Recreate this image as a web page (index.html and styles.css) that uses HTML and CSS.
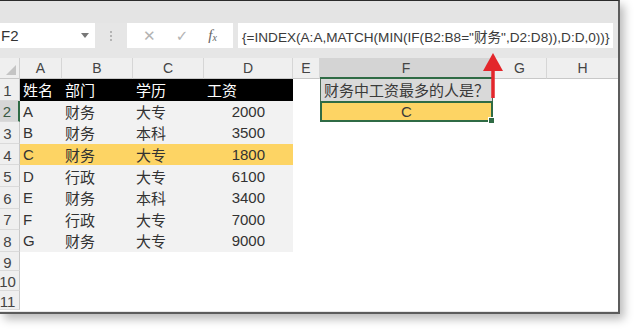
FILE: index.html
```html
<!DOCTYPE html>
<html lang="zh">
<head>
<meta charset="utf-8">
<link rel="stylesheet" href="styles.css">
</head>
<body>
<div class="window">
  <div class="ribbon"></div>
  <div class="fbar">
    <div class="namebox"><span class="ref">F2</span><span class="dd"></span></div>
    <div class="dots"><i></i><i></i><i></i></div>
    <div class="btns">
      <span class="ico">✕</span>
      <span class="ico">✓</span>
      <span class="fx">f<sub>x</sub></span>
    </div>
    <div class="formula">{=INDEX(A:A,MATCH(MIN(IF(B2:B8="财务",D2:D8)),D:D,0))}</div>
  </div>
  <div class="sheet">
    <div class="corner"><span class="tri"></span></div>
    <div class="ch">A</div><div class="ch">B</div><div class="ch">C</div><div class="ch">D</div><div class="ch">E</div><div class="ch on">F</div><div class="ch">G</div><div class="ch last">H</div>

    <div class="rh"><span>1</span></div>
    <div class="c hd">姓名</div><div class="c hd">部门</div><div class="c hd">学历</div><div class="c hd">工资</div><div class="c"></div><div class="c q">财务中工资最多的人是？</div><div class="c"></div><div class="c"></div>

    <div class="rh on"><span>2</span></div>
    <div class="c dt">A</div><div class="c dt">财务</div><div class="c dt">大专</div><div class="c dt num">2000</div><div class="c"></div><div class="c sel">C<span class="handle"></span></div><div class="c"></div><div class="c"></div>

    <div class="rh"><span>3</span></div>
    <div class="c dt">B</div><div class="c dt">财务</div><div class="c dt">本科</div><div class="c dt num">3500</div><div class="c"></div><div class="c"></div><div class="c"></div><div class="c"></div>

    <div class="rh"><span>4</span></div>
    <div class="c hl">C</div><div class="c hl">财务</div><div class="c hl">大专</div><div class="c hl num">1800</div><div class="c"></div><div class="c"></div><div class="c"></div><div class="c"></div>

    <div class="rh"><span>5</span></div>
    <div class="c dt">D</div><div class="c dt">行政</div><div class="c dt">大专</div><div class="c dt num">6100</div><div class="c"></div><div class="c"></div><div class="c"></div><div class="c"></div>

    <div class="rh"><span>6</span></div>
    <div class="c dt">E</div><div class="c dt">财务</div><div class="c dt">本科</div><div class="c dt num">3400</div><div class="c"></div><div class="c"></div><div class="c"></div><div class="c"></div>

    <div class="rh"><span>7</span></div>
    <div class="c dt">F</div><div class="c dt">行政</div><div class="c dt">大专</div><div class="c dt num">7000</div><div class="c"></div><div class="c"></div><div class="c"></div><div class="c"></div>

    <div class="rh"><span>8</span></div>
    <div class="c dt">G</div><div class="c dt">财务</div><div class="c dt">大专</div><div class="c dt num">9000</div><div class="c"></div><div class="c"></div><div class="c"></div><div class="c"></div>

    <div class="rh"><span>9</span></div>
    <div class="c"></div><div class="c"></div><div class="c"></div><div class="c"></div><div class="c"></div><div class="c"></div><div class="c"></div><div class="c"></div>

    <div class="rh"><span>10</span></div>
    <div class="c"></div><div class="c"></div><div class="c"></div><div class="c"></div><div class="c"></div><div class="c"></div><div class="c"></div><div class="c"></div>

    <div class="rh"><span>11</span></div>
    <div class="c"></div><div class="c"></div><div class="c"></div><div class="c"></div><div class="c"></div><div class="c"></div><div class="c"></div><div class="c"></div>
  </div>
  <svg class="arrow" width="24" height="50" viewBox="0 0 24 50">
    <path d="M12 16 L12 46" stroke="#e3262b" stroke-width="3.5" fill="none"/>
    <path d="M12 1 L22 19 L2 19 Z" fill="#e3262b"/>
  </svg>
</div>
</body>
</html>
```
FILE: styles.css
```css
html, body {
  margin: 0;
  padding: 0;
  background: #ffffff;
}
body {
  width: 640px;
  height: 335px;
  overflow: hidden;
  font-family: "Liberation Sans", "Noto Sans CJK SC", sans-serif;
  color: #333333;
}
.window {
  position: relative;
  width: 618px;
  height: 311px;
  border-top: 1px solid #2b2b2b;
  border-right: 2px solid #5c5c5c;
  border-bottom: 2px solid #5c5c5c;
  background: #e6e6e6;
  box-shadow: 4px 5px 9px rgba(0, 0, 0, 0.28);
}
.ribbon {
  height: 22px;
  background: #e4e4e4;
}
.fbar {
  height: 25px;
  display: flex;
  align-items: stretch;
  margin-bottom: 10px;
}
.namebox {
  width: 95px;
  background: #ffffff;
  display: flex;
  align-items: center;
  justify-content: space-between;
  padding: 0 6px 0 1px;
  box-sizing: border-box;
}
.ref {
  font-size: 15px;
  color: #333;
}
.dd {
  width: 0;
  height: 0;
  border-left: 4px solid transparent;
  border-right: 4px solid transparent;
  border-top: 5px solid #777;
}
.dots {
  width: 32px;
  display: flex;
  flex-direction: column;
  align-items: center;
  justify-content: center;
  gap: 2px;
}
.dots i {
  display: block;
  width: 2px;
  height: 2px;
  background: #b4b4b4;
}
.btns {
  width: 106px;
  background: #ffffff;
  display: flex;
  align-items: center;
  justify-content: space-around;
  padding: 0 6px;
  box-sizing: border-box;
}
.ico {
  color: #b3b3b3;
  font-size: 15px;
  font-family: "DejaVu Sans", sans-serif;
}
.fx {
  font-family: "Liberation Serif", serif;
  font-style: italic;
  font-size: 15px;
  color: #666;
}
.fx sub {
  font-size: 10px;
  vertical-align: -1px;
}
.formula {
  margin-left: 5px;
  width: 375px;
  background: #ffffff;
  display: flex;
  align-items: center;
  padding-left: 4px;
  box-sizing: border-box;
  font-size: 13.6px;
  color: #3a3a3a;
  white-space: nowrap;
  overflow: hidden;
}
.sheet {
  height: 253px;
  overflow: hidden;
  background: #ffffff;
  display: grid;
  grid-template-columns: 20px 42px 71px 71px 89px 27px 173px 54px 1fr;
  grid-template-rows: 21px repeat(8, 21.6px) repeat(3, 19.5px);
}
.corner {
  background: #efefef;
  border-right: 1px solid #cfcfcf;
  border-bottom: 1px solid #c8c8c8;
  position: relative;
}
.tri {
  position: absolute;
  right: 3px;
  bottom: 3px;
  width: 0;
  height: 0;
  border-left: 10px solid transparent;
  border-bottom: 10px solid #c4c4c4;
}
.ch {
  background: #efefef;
  border-right: 1px solid #d6d6d6;
  border-bottom: 1px solid #c8c8c8;
  display: flex;
  align-items: center;
  justify-content: center;
  font-size: 14px;
  color: #444;
}
.ch.on {
  background: #d4d4d4;
  border-bottom: 2px solid #2f6b45;
}
.ch.last {
  border-right: none;
}
.rh {
  background: #efefef;
  border-right: 1px solid #c8c8c8;
  border-bottom: 1px solid #dadada;
  display: flex;
  align-items: center;
  justify-content: center;
  padding: 3px 4px 0 0;
  font-size: 15px;
  color: #444;
  line-height: 16px;
}
.rh span {
  white-space: nowrap;
}
.rh.on {
  background: #d6d6d6;
  border-right: 2px solid #2f6b45;
  color: #3a5a44;
}
.c {
  display: flex;
  align-items: center;
  padding-left: 3px;
  font-size: 15px;
  white-space: nowrap;
  min-width: 0;
}
.hd {
  background: #000000;
  color: #ffffff;
}
.dt {
  background: #f2f2f2;
}
.hl {
  background: #fdd464;
}
.num {
  justify-content: flex-end;
  padding-right: 28px;
}
.q {
  background: #d9d9d9;
  color: #3a3a3a;
  border-left: 1px solid #4d6b55;
  border-right: 1px solid #4d6b55;
}
.sel {
  position: relative;
  background: #fdd464;
  border: 2px solid #2f6b45;
  justify-content: center;
  padding-left: 0;
  color: #3a3a3a;
}
.handle {
  position: absolute;
  right: -4px;
  bottom: -4px;
  width: 5px;
  height: 5px;
  background: #2f6b45;
  border: 1px solid #ffffff;
}
.arrow {
  position: absolute;
  left: 481px;
  top: 51px;
}
```
